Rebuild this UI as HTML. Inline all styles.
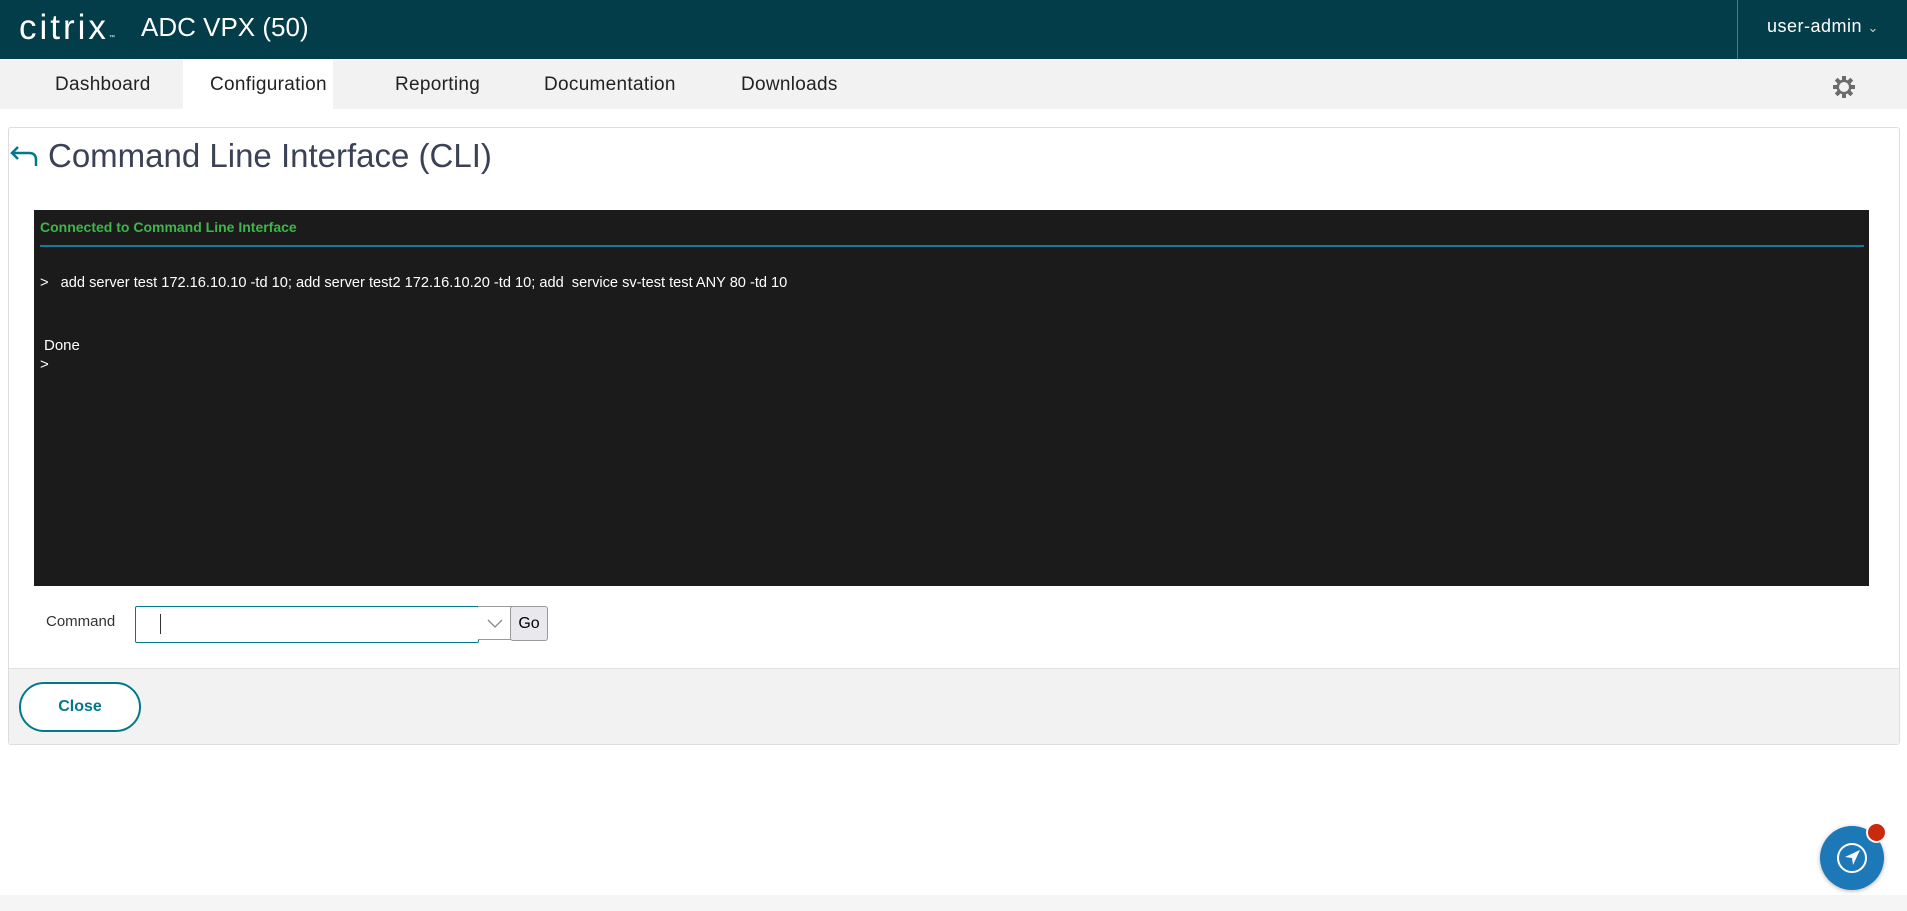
<!DOCTYPE html>
<html><head><meta charset="utf-8"><style>
*{box-sizing:border-box;margin:0;padding:0}
body{width:1907px;height:911px;position:relative;background:#fff;font-family:"Liberation Sans",sans-serif;overflow:hidden}
.a{position:absolute;white-space:nowrap}
</style></head><body>
<div class="a" style="left:0;top:0;width:1907px;height:59px;background:#023d49"></div>
<div class="a" style="left:19px;top:8px;font-size:35px;color:#fff;font-weight:300;letter-spacing:3px">citrix<span style="font-size:6px">™</span></div>
<div class="a" style="left:141px;top:12px;font-size:26px;color:#fff">ADC VPX (50)</div>
<div class="a" style="left:1737px;top:0;width:1px;height:59px;background:#4f7a83"></div>
<div class="a" style="left:1767px;top:16px;font-size:18px;color:#fff;letter-spacing:0.5px">user-admin <span style="font-size:13px;color:#ccc">&#8964;</span></div>
<div class="a" style="left:0;top:59px;width:1907px;height:50px;background:#f2f2f2"></div>
<div class="a" style="left:183px;top:59px;width:150px;height:50px;background:#fff"></div>
<div class="a" style="left:55px;top:74px;font-size:19px;color:#222;letter-spacing:0.3px">Dashboard</div>
<div class="a" style="left:210px;top:74px;font-size:19px;color:#222;letter-spacing:0.3px">Configuration</div>
<div class="a" style="left:395px;top:74px;font-size:19px;color:#222;letter-spacing:0.3px">Reporting</div>
<div class="a" style="left:544px;top:74px;font-size:19px;color:#222;letter-spacing:0.3px">Documentation</div>
<div class="a" style="left:741px;top:74px;font-size:19px;color:#222;letter-spacing:0.3px">Downloads</div>
<svg class="a" style="left:1832px;top:75px" width="24" height="24" viewBox="0 0 24 24"><g stroke="#6b6b6b" stroke-width="4"><line x1="12" y1="1" x2="12" y2="23"/><line x1="1" y1="12" x2="23" y2="12"/><line x1="4.2" y1="4.2" x2="19.8" y2="19.8"/><line x1="19.8" y1="4.2" x2="4.2" y2="19.8"/></g><circle cx="12" cy="12" r="7.5" fill="#6b6b6b"/><circle cx="12" cy="12" r="5" fill="#f2f2f2"/></svg>
<div class="a" style="left:8px;top:127px;width:1892px;height:618px;border:1px solid #ddd;border-radius:3px"></div>
<svg class="a" style="left:9px;top:144px" width="30" height="24" viewBox="0 0 30 24"><path d="M9 3 L3 9 L9 15 M3 9 H20 Q27 9 27 16 V22" fill="none" stroke="#02798a" stroke-width="2.5"/></svg>
<div class="a" style="left:48px;top:137px;font-size:33px;color:#3b4256">Command Line Interface (CLI)</div>
<div class="a" style="left:34px;top:210px;width:1835px;height:376px;background:#1b1b1b"></div>
<div class="a" style="left:40px;top:219px;font-size:14px;color:#3fb54a;font-weight:bold">Connected to Command Line Interface</div>
<div class="a" style="left:40px;top:245px;width:1824px;height:2px;background:#1e7595"></div>
<div class="a" style="left:40px;top:275px;font-size:14.6px;color:#fff">&gt; &nbsp; add server test 172.16.10.10 -td 10; add server test2 172.16.10.20 -td 10; add &nbsp;service sv-test test ANY 80 -td 10</div>
<div class="a" style="left:44px;top:337px;font-size:15px;color:#fff">Done</div>
<div class="a" style="left:40px;top:356px;font-size:15px;color:#fff">&gt;</div>
<div class="a" style="left:46px;top:613px;font-size:15px;color:#333">Command</div>
<div class="a" style="left:135px;top:606px;width:344px;height:37px;border:1px solid #02798a;border-radius:2px;background:#fff"></div>
<div class="a" style="left:160px;top:614px;width:1px;height:20px;background:#333"></div>
<div class="a" style="left:478px;top:606px;width:34px;height:34px;border:1px solid #999;border-left:none;background:#fff"></div>
<svg class="a" style="left:486px;top:617px" width="18" height="12" viewBox="0 0 18 12"><path d="M2 3 L9 10 L16 3" fill="none" stroke="#888" stroke-width="1.3"/></svg>
<div class="a" style="left:510px;top:606px;width:38px;height:35px;border:1px solid #999;border-radius:3px;background:#e9e9ed;font-size:16px;color:#000;text-align:center;line-height:33px">Go</div>
<div class="a" style="left:9px;top:668px;width:1890px;height:76px;background:#f2f2f2;border-top:1px solid #e2e2e2"></div>
<div class="a" style="left:19px;top:682px;width:122px;height:50px;border:2px solid #02798a;border-radius:25px;background:#fff;color:#02798a;font-weight:bold;font-size:16px;text-align:center;line-height:46px">Close</div>
<div class="a" style="left:0;top:895px;width:1907px;height:16px;background:#f5f5f5"></div>
<div class="a" style="left:1820px;top:826px;width:64px;height:64px;border-radius:50%;background:#1c78b6;box-shadow:0 1px 4px rgba(0,0,0,.3)"></div>
<svg class="a" style="left:1835px;top:841px" width="34" height="34" viewBox="0 0 34 34"><circle cx="17" cy="17" r="14" fill="none" stroke="#fff" stroke-width="2"/><path d="M25 9 L10 16 L17 17 L18 24 Z" fill="#fff"/></svg>
<div class="a" style="left:1866px;top:822px;width:21px;height:21px;border-radius:50%;background:#cc2a0e;border:2px solid #fff"></div>
</body></html>
